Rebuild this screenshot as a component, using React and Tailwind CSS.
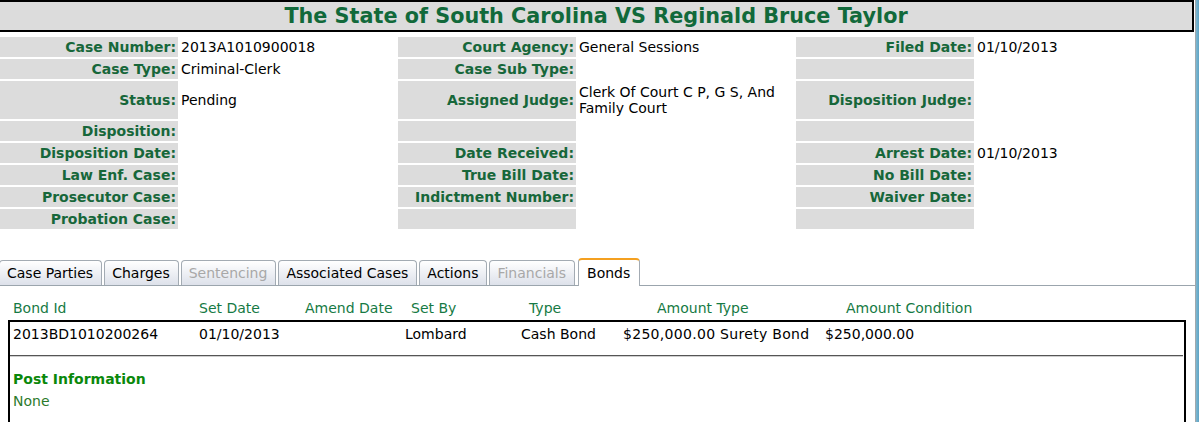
import React from 'react';

const FONT = "font-['DejaVu_Sans',Verdana,sans-serif]";

const rows = [
  { h: 'h-[20px]', cells: [['Case Number:', '2013A1010900018'], ['Court Agency:', 'General Sessions'], ['Filed Date:', '01/10/2013']] },
  { h: 'h-[20px]', cells: [['Case Type:', 'Criminal-Clerk'], ['Case Sub Type:', ''], ['', '']] },
  { h: 'h-[38px]', cells: [['Status:', 'Pending'], ['Assigned Judge:', 'Clerk Of Court C P, G S, And Family Court'], ['Disposition Judge:', '']] },
  { h: 'h-[20px]', cells: [['Disposition:', ''], ['', ''], ['', '']] },
  { h: 'h-[20px]', cells: [['Disposition Date:', ''], ['Date Received:', ''], ['Arrest Date:', '01/10/2013']] },
  { h: 'h-[20px]', cells: [['Law Enf. Case:', ''], ['True Bill Date:', ''], ['No Bill Date:', '']] },
  { h: 'h-[20px]', cells: [['Prosecutor Case:', ''], ['Indictment Number:', ''], ['Waiver Date:', '']] },
  { h: 'h-[20px]', cells: [['Probation Case:', ''], ['', ''], ['', '']] },
];

const tabs = [
  { name: 'Case Parties' },
  { name: 'Charges' },
  { name: 'Sentencing', disabled: true },
  { name: 'Associated Cases' },
  { name: 'Actions' },
  { name: 'Financials', disabled: true },
  { name: 'Bonds', active: true },
];

const CaseFields = () => (
  <div className="mt-[5px] flex flex-col gap-[2px]">
    {rows.map((row, i) => (
      <div key={i} className={`flex ${row.h}`}>
        {row.cells.map(([label, value], j) => (
          <div key={j} className="flex w-[398px]">
            <div className="w-[178px] bg-[#dcdcdc] flex items-center justify-end pr-[2px] font-bold text-[#17673a] text-[14px] leading-[16px]">
              {label}
            </div>
            <div className="w-[218px] flex items-center pl-[3px] text-[14px] leading-[16px] text-black">
              {value}
            </div>
          </div>
        ))}
      </div>
    ))}
  </div>
);

const Tabs = () => (
  <div className="mt-[29px] flex items-end h-[28px] border-b border-[#9ba5ad]">
    {tabs.map((t) =>
      t.active ? (
        <div
          key={t.name}
          className="ml-[1px] -mb-px h-[28px] pl-[8px] pr-[9px] flex items-center bg-white border border-[#a3abb3] border-b-0 border-t-[2px] border-t-[#f4a020] rounded-t-[4px] text-[14px] text-black"
        >
          {t.name}
        </div>
      ) : (
        <div
          key={t.name}
          className={`mr-[2px] first:-ml-px h-[25px] pl-[7px] pr-[8px] flex items-center border border-b-0 border-[#a3abb3] rounded-t-[4px] bg-gradient-to-b from-white to-[#dde1ea] text-[14px] ${
            t.disabled ? 'text-[#a8a8a8]' : 'text-black'
          }`}
        >
          {t.name}
        </div>
      )
    )}
  </div>
);

const BondsPanel = () => (
  <div className="pl-[8px] pr-[9px]">
    <div className="flex h-[34px] items-end pb-[1px] pl-[5px] text-[14px] text-[#167a44]">
      <div className="w-[186px]">Bond Id</div>
      <div className="w-[106px]">Set Date</div>
      <div className="w-[106px]">Amend Date</div>
      <div className="w-[118px]">Set By</div>
      <div className="w-[128px]">Type</div>
      <div className="w-[189px]">Amount Type</div>
      <div>Amount Condition</div>
    </div>
    <div className="border-2 border-black h-[120px]">
      <div className="flex h-[33px] items-center pb-[9px] pl-[3px] text-[14px] text-black">
        <div className="w-[186px]">2013BD1010200264</div>
        <div className="w-[206px]">01/10/2013</div>
        <div className="w-[116px]">Lombard</div>
        <div className="w-[102px]">Cash Bond</div>
        <div className="w-[202px] tracking-[0.3px]">$250,000.00 Surety Bond</div>
        <div>$250,000.00</div>
      </div>
      <div className="h-px bg-[#555555] mr-[1px]" />
      <div className="h-px bg-[#cfcfcf] mr-[1px]" />
      <div className="pl-[3px] pt-[13px]">
        <div className="font-bold text-[14px] leading-[18px] text-[#0a880a]">Post Information</div>
        <div className="mt-[4px] text-[14px] leading-[18px] text-[#2c7a2c]">None</div>
      </div>
    </div>
  </div>
);

export default function App() {
  return (
    <div className={`w-[1199px] h-[422px] overflow-hidden bg-white flex ${FONT}`}>
      <div className="w-[1195px] shrink-0">
        <div className="h-[32px] mr-[1px] bg-[#dcdcdc] border-2 border-l-0 border-black flex items-center justify-center">
          <h1 className="text-[20.75px] font-bold text-[#11693a] leading-none">
            The State of South Carolina VS Reginald Bruce Taylor
          </h1>
        </div>
        <CaseFields />
        <Tabs />
        <BondsPanel />
      </div>
      <div className="w-[1px] bg-[#a2a8ac]" />
      <div className="flex-1 bg-gradient-to-r from-[#7fb8d0] to-[#5ea3c4]" />
    </div>
  );
}
